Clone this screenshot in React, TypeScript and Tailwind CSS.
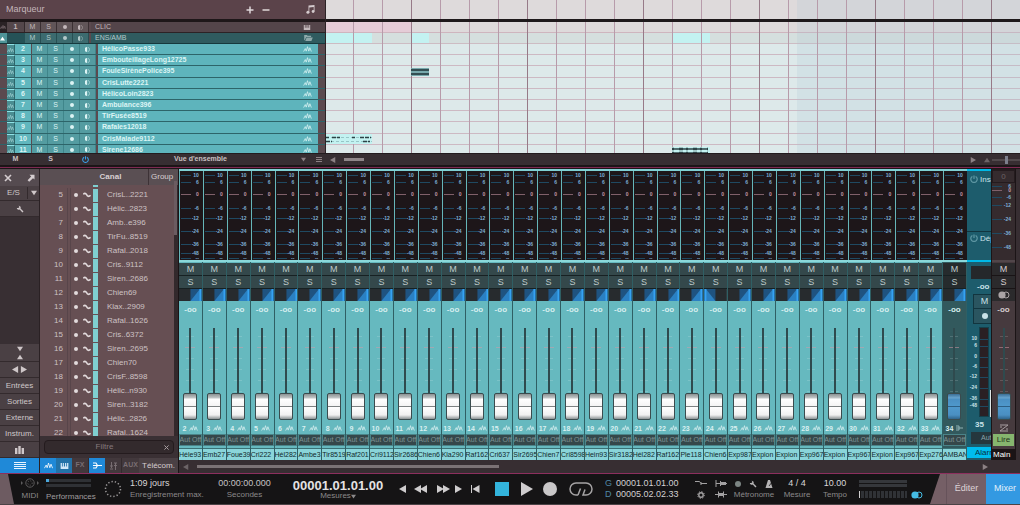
import type { ReactNode } from 'react';

type Track = { id: number; name: string };

const tracks: Track[] = [
  { id: 2, name: 'HélicoPasse933' },
  { id: 3, name: 'EmbouteillageLong12725' },
  { id: 4, name: 'FouleSirènePolice395' },
  { id: 5, name: 'CrisLutte2221' },
  { id: 6, name: 'HélicoLoin2823' },
  { id: 7, name: 'Ambulance396' },
  { id: 8, name: 'TirFusée8519' },
  { id: 9, name: 'Rafales12018' },
  { id: 10, name: 'CrisMalade9112' },
  { id: 11, name: 'Sirene12686' },
];

const channelList: Track[] = [
  { id: 5, name: 'CrisL..2221' },
  { id: 6, name: 'Hélic..2823' },
  { id: 7, name: 'Amb..e396' },
  { id: 8, name: 'TirFu..8519' },
  { id: 9, name: 'Rafal..2018' },
  { id: 10, name: 'Cris..9112' },
  { id: 11, name: 'Siren..2686' },
  { id: 12, name: 'Chien69' },
  { id: 13, name: 'Klax..2909' },
  { id: 14, name: 'Rafal..1626' },
  { id: 15, name: 'Cris..6372' },
  { id: 16, name: 'Siren..2695' },
  { id: 17, name: 'Chien70' },
  { id: 18, name: 'CrisF..8598' },
  { id: 19, name: 'Hélic..n930' },
  { id: 20, name: 'Siren..3182' },
  { id: 21, name: 'Hélic..2826' },
  { id: 22, name: 'Rafal..1624' },
];

const strips = [
  'Héle93', 'Emb27', 'Foue39', 'Cri222', 'Hél282', 'Ambe3', 'Tir8519', 'Raf201', 'Cri9112', 'Sir2686', 'Chien6',
  'Kla290', 'Raf162', 'Cri637', 'Sir2695', 'Chien7', 'Cri8598', 'Hein93', 'Sir3182', 'Hél282', 'Raf162', 'Ple118',
  'Chien6', 'Exp987', 'Expion', 'Expion', 'Exp967', 'Expion', 'Exp967', 'Expion', 'Exp967', 'Exp276', 'AMBAN',
];

const meterScale = [
  { label: '10', h: 'h-[7px]' },
  { label: '6', h: 'h-[7px]' },
  { label: '0', h: 'h-[17px]' },
  { label: '-6', h: 'h-[10px]' },
  { label: '-12', h: 'h-[11px]' },
  { label: '-24', h: 'h-[14px]' },
  { label: '-36', h: 'h-[13px]' },
  { label: '-48', h: 'h-[4px]' },
  { label: '--', h: 'h-[7px]' },
];

const mainScale = [
  { label: '6', h: 'h-[4px]' },
  { label: '0', h: 'h-[5px]' },
  { label: '-6', h: 'h-[8px]' },
  { label: '-12', h: 'h-[8px]' },
  { label: '-24', h: 'h-[20px]' },
  { label: '-36', h: 'h-[8px]' },
  { label: '-48', h: 'h-[20px]' },
];

const alanScale = [
  { label: '10', h: 'h-[7px]' },
  { label: '6', h: 'h-[7px]' },
  { label: '0', h: 'h-[14px]' },
  { label: '-6', h: 'h-[7px]' },
  { label: '-12', h: 'h-[12px]' },
  { label: '-24', h: 'h-[10px]' },
  { label: '-36', h: 'h-[12px]' },
  { label: '-48', h: 'h-[3px]' },
];

function Wave({ className }: { className?: string }) {
  return (
    <svg viewBox="0 0 10 7" className={className} fill="none" stroke="currentColor" strokeWidth="0.9">
      <path d="M0.5 6.5 L2.4 3 L3.5 6 L5 0.8 L6.5 6 L7.8 2 L9.5 6.5" />
    </svg>
  );
}

function Sine({ className }: { className?: string }) {
  return (
    <svg viewBox="0 0 8 6" className={className} fill="none" stroke="currentColor" strokeWidth="1.6">
      <path d="M0.3 2.4 C1.2 1 2.6 1 3.6 2.6 C4.6 4.4 5.8 5 7.6 3.4" />
    </svg>
  );
}

function Wrench({ className }: { className?: string }) {
  return (
    <svg viewBox="0 0 10 10" className={className}>
      <path d="M1 3.6 A2.6 2.6 0 0 0 4.6 5.6 L8 9.4 L9.4 8 L5.7 4.4 A2.6 2.6 0 0 0 3.2 0.8 L4.3 2.4 L3 3.8 Z" fill="currentColor" />
    </svg>
  );
}

function Power({ className }: { className?: string }) {
  return (
    <svg viewBox="0 0 10 10" className={className} fill="none" stroke="currentColor" strokeWidth="1.5">
      <path d="M3 1.8 A4 4 0 1 0 7 1.8 M5 0.5 V5" />
    </svg>
  );
}

function Keys({ className }: { className?: string }) {
  return (
    <svg viewBox="0 0 10 7" className={className}>
      <path d="M0.5 0 H2 V4 H3 V0 H4.3 V4 H5.6 V0 H7 V4 H8 V0 H9.5 V7 H0.5 Z" fill="currentColor" />
    </svg>
  );
}

function Tri({ dir, className }: { dir: 'left' | 'right' | 'up' | 'down'; className?: string }) {
  const paths = { left: 'M7 0 V8 L0 4 Z', right: 'M1 0 V8 L8 4 Z', up: 'M0 7 H8 L4 1 Z', down: 'M0 1 H8 L4 7 Z' };
  return (
    <svg viewBox="0 0 8 8" className={className}>
      <path d={paths[dir]} fill="currentColor" />
    </svg>
  );
}

function Stereo({ className }: { className?: string }) {
  return (
    <svg viewBox="0 0 12 8" className={className}>
      <circle cx="4" cy="4" r="3.6" fill="currentColor" />
      <circle cx="8" cy="4" r="3" fill="none" stroke="currentColor" />
    </svg>
  );
}

function TrackButtons({ tone }: { tone: string }) {
  return (
    <>
      <button className={`w-4 ${tone}`}>M</button>
      <button className={`w-4 ${tone}`}>S</button>
      <button aria-label="Record" className={`flex w-4 items-center justify-center ${tone}`}>
        <span className="size-1 rounded-full bg-current" />
      </button>
      <button aria-label="Monitor" className={`flex w-4 items-center justify-center ${tone}`}>
        <svg viewBox="0 0 6 6" className="size-[5px]">
          <path d="M2.6 0 V6 A3 3 0 0 1 2.6 0 Z" fill="currentColor" />
          <path d="M3.6 0.5 A2.6 2.6 0 0 1 3.6 5.5" fill="none" stroke="currentColor" strokeWidth="0.6" />
        </svg>
      </button>
    </>
  );
}

function TrackPanel() {
  return (
    <div className="flex w-[326px] flex-none flex-col border-r border-[#2b2225] bg-[#5b4a4f]">
      <div className="flex h-[19px] items-center bg-[#5b434a] pl-1.5 pr-2.5 text-[9px] text-[#c4b6ba]">
        <span className="flex-1">Marqueur</span>
        <button aria-label="Add" className="mr-2">
          <svg viewBox="0 0 8 8" className="size-2"><path d="M4 0.5 V7.5 M0.5 4 H7.5" stroke="#e0d8da" strokeWidth="1.5" /></svg>
        </button>
        <button aria-label="Remove" className="mr-9">
          <svg viewBox="0 0 8 8" className="size-2"><path d="M0.5 4 H7.5" stroke="#e0d8da" strokeWidth="1.5" /></svg>
        </button>
        <svg viewBox="0 0 9 9" className="size-[9px] text-[#d5cbce]" fill="currentColor">
          <path d="M2.5 0.5 L8.5 0 V6.5 H7.7 V2 L3.3 2.4 V7.5 H2.5 Z" />
          <circle cx="1.9" cy="7.3" r="1.5" />
          <circle cx="7.1" cy="6.5" r="1.4" />
        </svg>
      </div>
      <div className="h-[3px] bg-[#1e1719]" />
      <div className="flex h-[11px] border-b border-[#2c2225] text-[7px] leading-[10px] text-[#c3b8bb]">
        <div className="w-[7px] bg-[#2a2225]"><Wave className="mt-0.5 size-1.5 text-[#8d7d82]" /></div>
        <div className="w-[18px] border-r border-[#33292c] bg-[#54474b] text-center font-bold">1</div>
        <TrackButtons tone="border-r border-[#3b3033] bg-[#615558]" />
        <div className="ml-0.5 flex flex-1 items-center justify-between bg-[#54454a] pl-1 pr-3.5">
          <span>CLIC</span>
          <Keys className="h-[5px] w-2" />
        </div>
      </div>
      <div className="flex h-[11px] border-b border-[#16393d] text-[7px] leading-[10px] text-[#b3c9ca]">
        <div className="flex w-[7px] items-center bg-[#4f9498]"><Tri dir="up" className="size-[5px] text-white" /></div>
        <div className="w-[18px] bg-[#255257]" />
        <TrackButtons tone="border-r border-[#274f53] bg-[#3c6b6f]" />
        <div className="ml-0.5 flex flex-1 items-center justify-between bg-[#2f5b5f] pl-1 pr-3">
          <span>ENS/AMB</span>
          <svg viewBox="0 0 10 7" className="h-1.5 w-[9px]" fill="#8fa9ab"><path d="M0 0 H3 L4 1 H8 V2.4 H2.4 L0.6 6 H0 Z M2.8 3 H10 L8.4 7 H1.2 Z" /></svg>
        </div>
      </div>
      <div className="h-[109px] overflow-hidden">
        <div className="grid h-28 auto-rows-fr">
          {tracks.map((t) => (
            <div key={t.id} className="flex border-b border-[#2d6469] px-[7px] text-[7px] leading-[10px] text-[#dcf4f4]">
              <div className="w-2 border-r border-t border-[#2d6469] border-t-[#8fe3e6] bg-[#4a8d91]">
                <Wave className="mt-0.5 h-1.5 w-[7px] text-[#9fd0d3]" />
              </div>
              <div className="mr-px w-4 bg-[#60b7be] text-center font-bold">{t.id}</div>
              <TrackButtons tone="border-r border-[#3f858a] bg-[#549ca1]" />
              <div className="ml-0.5 flex min-w-0 flex-1 items-center justify-between bg-[#5eb4bc] pl-1 pr-1.5">
                <span className="font-bold">{t.name}</span>
                <Wave className="h-1.5 w-[9px]" />
              </div>
            </div>
          ))}
        </div>
      </div>
    </div>
  );
}

function Arrangement() {
  return (
    <div className="relative min-w-0 flex-1 overflow-hidden">
      <div className="h-[19px] bg-[#dedadb]" />
      <div className="relative z-10 h-[3px] bg-[#1e191b]" />
      <div className="h-[11px] border-b border-[#cfb5be] bg-[#dedadb]">
        <div className="h-full w-[85px] bg-[#e5ccd7]" />
      </div>
      <div className="relative h-[11px] border-b border-[#cdbcc3] bg-[#d5dfde]">
        <div className="absolute left-0 top-0 h-full w-[46px] bg-[#c3f2f1]" />
        <div className="absolute left-[85px] top-0 h-full w-[18px] bg-[#c3f2f1]" />
        <div className="absolute left-[346px] top-0 h-full w-[38px] bg-[#c3f2f1]" />
      </div>
      <div className="h-[109px] overflow-hidden">
        <div className="grid h-28 auto-rows-fr bg-[#dde9ea]">
          {tracks.map((t) => (
            <div key={t.id} className="relative border-b border-[#cdb9c3]">
              {t.id === 4 && (
                <svg viewBox="0 0 18 8" className="absolute left-[85px] top-0.5 z-10 h-2 w-[18px]">
                  <rect width="18" height="8" fill="#8fc7ca" />
                  <path d="M0 2 H18 M0 6 H18" stroke="#344e53" strokeWidth="2.4" />
                </svg>
              )}
              {t.id === 10 && (
                <svg viewBox="0 0 46 10" className="absolute left-0 top-0 z-10 h-2.5 w-[46px]">
                  <rect width="46" height="10" fill="#c3f2f1" />
                  <path d="M0 3.5 H46 M0 7.5 H46" stroke="#6c9a9c" strokeWidth="0.5" strokeDasharray="3 2" />
                  <path d="M0 3.5 H3 M6 3.5 H14 M26 3.5 H29 M34 3.5 H45 M0 7.5 H6 M37 7.5 H44" stroke="#2c4246" strokeWidth="1.6" strokeDasharray="4 1" />
                </svg>
              )}
              {t.id === 11 && (
                <svg viewBox="0 0 38 8" className="absolute left-[346px] top-0.5 z-10 h-2 w-[38px]">
                  <rect width="38" height="8" fill="#c3f2f1" />
                  <path d="M0 2 H36 M0 6 H36" stroke="#2c4246" strokeWidth="1.4" />
                  <path d="M0 2 H36 M0 6 H36" stroke="#2c4246" strokeWidth="2.4" strokeDasharray="2 5 4 3" />
                </svg>
              )}
            </div>
          ))}
        </div>
      </div>
      {/* past the end of the song */}
      <div className="absolute inset-y-0 left-[471px] right-0 bg-[#a9c5d0]/20" />
      <div className="absolute inset-0 bg-[linear-gradient(90deg,transparent_27px,#b79baa_27px,#b79baa_28px,transparent_28px)] bg-size-[29px_100%]" />
      <div className="absolute inset-0 bg-[linear-gradient(90deg,transparent_85px,#977a88_85px,#977a88_86px,transparent_86px)] bg-size-[116px_100%]" />
    </div>
  );
}

function OverviewBar() {
  return (
    <div className="flex h-3 items-center border-t border-[#231b1e] bg-[#372e32] text-[7px] text-[#c9c1c3]">
      <div className="flex w-[326px] flex-none items-center">
        <button className="w-[31px] font-bold">M</button>
        <button className="w-[39px] font-bold">S</button>
        <button aria-label="Power" className="flex w-[30px] justify-center"><Power className="size-[7px] text-[#3aa0e8]" /></button>
        <span className="flex-1 text-center font-bold">Vue d'ensemble</span>
        <Tri dir="down" className="mr-2.5 size-[5px] text-[#8c8184]" />
        <svg viewBox="0 0 6 5" className="mr-1 h-[5px] w-1.5" fill="#8c8184"><path d="M0 0 H6 V1 H0 Z M0 2 H6 V3 H0 Z M0 4 H6 V5 H0 Z" /></svg>
      </div>
      <Tri dir="left" className="ml-1 size-1.5 text-[#8c8184]" />
      <div className="ml-2 h-[3px] w-5 bg-[#8f8689]" />
      <div className="flex-1" />
      <Tri dir="right" className="mr-2 size-1.5 text-[#8c8184]" />
      <Tri dir="up" className="mr-0.5 size-1.5 text-[#6c6467]" />
      <svg viewBox="0 0 28 8" className="h-2 w-7"><path d="M0 4 H28" stroke="#6c6467" /><rect x="13" width="3" height="8" fill="#7d7f8c" /></svg>
    </div>
  );
}

function SideCell({ children, tall }: { children: ReactNode; tall?: boolean }) {
  return (
    <button className={`flex w-full flex-col items-center justify-center border-b border-[#332a2d] bg-[#4a4044] ${tall ? 'h-[18px]' : 'h-4'}`}>
      {children}
    </button>
  );
}

function MixerSide() {
  return (
    <div className="flex w-10 flex-none flex-col border-r border-[#2a2124] bg-[#382f33] text-[8px] text-[#cfc7c9]">
      <div className="flex h-[17px] items-center justify-between bg-[#554b50] px-1">
        <button aria-label="Close">
          <svg viewBox="0 0 8 8" className="size-2"><path d="M1 1 L7 7 M7 1 L1 7" stroke="#d5cdd0" strokeWidth="1.6" /></svg>
        </button>
        <button aria-label="Detach">
          <svg viewBox="0 0 8 8" className="size-2"><path d="M2.5 0.8 H7.5 V5.5 L6 4.2 L2.2 7.8 L0.6 6.2 L4.2 2.5 Z" fill="#d5cdd0" /></svg>
        </button>
      </div>
      <div className="flex h-[15px] items-center border-b border-[#332a2d] bg-[#4a4044]">
        <button className="w-7 border-r border-[#332a2d]">E/S</button>
        <Tri dir="down" className="mx-auto size-1.5" />
      </div>
      <SideCell><Wrench className="size-2" /></SideCell>
      <div className="flex-1" />
      <SideCell tall>
        <Tri dir="down" className="mb-0.5 size-1.5" />
        <Tri dir="up" className="size-1.5" />
      </SideCell>
      <SideCell>
        <span className="flex gap-px"><Tri dir="left" className="size-[7px]" /><Tri dir="right" className="size-[7px]" /></span>
      </SideCell>
      <SideCell>Entrées</SideCell>
      <SideCell>Sorties</SideCell>
      <SideCell>Externe</SideCell>
      <SideCell>Instrum.</SideCell>
      <SideCell>
        <svg viewBox="0 0 9 8" className="h-2 w-[9px]"><path d="M0 2 H2.4 V8 H0 Z M3.3 0 H5.7 V8 H3.3 Z M6.6 2 H9 V8 H6.6 Z" fill="currentColor" /></svg>
      </SideCell>
      <button aria-label="Channel list" className="flex h-[15px] items-center justify-center bg-[#1f89d8]">
        <svg viewBox="0 0 12 7" className="h-[7px] w-3" fill="#e8f4ff"><path d="M0 0 H12 V1 H0 Z M0 2 H12 V3 H0 Z M0 4 H12 V5 H0 Z M0 6 H12 V7 H0 Z" /></svg>
      </button>
    </div>
  );
}

function ChannelList() {
  return (
    <div className="flex w-[139px] flex-none flex-col border-r border-[#1b1416] bg-[#3a3034]">
      <div className="flex h-4 items-center bg-[#5a4f53] text-[8px] leading-none text-[#d8cfd2]">
        <span className="ml-[33px] w-[75px] text-center font-bold">Canal</span>
        <span className="h-full w-px bg-[#3d3236]" />
        <span className="pl-0.5">Group</span>
      </div>
      <div className="flex h-[251px]">
        <div className="w-[134px] overflow-hidden bg-[#664f53]">
          <div className="mb-px ml-[53px] h-0.5 w-[5px] bg-[#7fcfd0]" />
          {channelList.map((c) => (
            <div key={c.id} className="flex h-3.5 items-center text-[8px] leading-none text-[#cdc2c4]">
              <span className="w-[23px] text-right">{c.id}</span>
              <span className="ml-1 h-full w-1 border-x border-[#58454a]" />
              <span className="ml-[3px] size-1 rounded-full bg-[#e2dadc]" />
              <Sine className="ml-[5px] h-1.5 w-2 text-[#e2dadc]" />
              <span className="ml-0.5 h-[13px] w-[5px] bg-[#7fcfd0]" />
              <span className="ml-[9px]">{c.name}</span>
            </div>
          ))}
        </div>
        <div className="flex-1 bg-[#33292c]">
          <div className="-mt-1 h-[54px] w-[3px] bg-[#6b5c61]" />
        </div>
      </div>
      <div className="flex flex-1 items-center px-1">
        <div className="flex h-3.5 w-full items-center rounded-sm border border-[#241b1e] bg-[#332a2d] pr-1">
          <input aria-label="Filtre" placeholder="Filtre" className="w-full min-w-0 bg-transparent text-center text-[8px] leading-3 text-[#cfc7c9] outline-none placeholder:text-[#85797d]" />
          <svg viewBox="0 0 6 6" className="size-[5px] flex-none"><path d="M0.5 0.5 L5.5 5.5 M5.5 0.5 L0.5 5.5" stroke="#a89ea1" strokeWidth="1.2" /></svg>
        </div>
      </div>
      <div className="flex h-[15px] text-[7px] text-[#796e72]">
        <button aria-label="Audio" className="flex w-4 items-center justify-center bg-[#1f89d8]"><Wave className="h-[7px] w-[9px] text-white" /></button>
        <button aria-label="Instruments" className="flex w-4 items-center justify-center bg-[#2272a8]"><Keys className="h-1.5 w-[9px] text-[#cfe6f7]" /></button>
        <button className="w-[17px] border-r border-[#332a2d] bg-[#42383c] font-bold">FX</button>
        <button aria-label="Bus" className="flex w-4 items-center justify-center bg-[#1f89d8]">
          <svg viewBox="0 0 9 7" className="h-[7px] w-[9px]"><path d="M0 1 H3 L4.5 3.5 H9 M0 3.5 H5 M0 6 H3 L4.5 3.5" stroke="#fff" strokeWidth="1.1" fill="none" /></svg>
        </button>
        <button aria-label="VCA" className="flex w-[17px] items-center justify-center border-r border-[#332a2d] bg-[#42383c]">
          <svg viewBox="0 0 9 8" className="h-2 w-[9px]" stroke="currentColor" fill="none"><path d="M2.5 0 V6 M1 4 H4 M1 7 H4 M6.5 1 V8 M5 3.5 H8 M5 1 H8" /></svg>
        </button>
        <button className="w-[17px] bg-[#42383c] font-bold">AUX</button>
        <button className="flex-1 bg-[#4a4044] text-[8px] text-[#d5cdd0]">Télécom.</button>
      </div>
    </div>
  );
}

function Scale({ items }: { items: { label: string; h: string }[] }) {
  return (
    <>
      {items.map((s) => (
        <div key={s.label} className={`flex items-center justify-between pr-1 text-[5px] font-bold leading-none ${s.h} ${s.label === '0' ? 'text-[#c39aa8]' : 'text-[#7fb0d6]'}`}>
          <span className={`h-px w-2.5 ${s.label === '0' ? 'bg-[#80606a]' : 'bg-[#1f4961]'}`} />
          {s.label}
        </div>
      ))}
    </>
  );
}

function Pan({ flip }: { flip?: boolean }) {
  return (
    <svg viewBox="0 0 24 12" preserveAspectRatio="none" className={`h-3 w-full bg-[#272b2e] ${flip ? '-scale-x-100' : ''}`}>
      <rect x="12" width="12" height="12" fill="#1f5380" />
      <path d="M12 12 L22 0 V12 Z" fill="#2b80c2" />
      <rect x="21.5" width="2" height="12" fill="#35a3f2" />
    </svg>
  );
}

function Fader({ label, blue }: { label: string; blue?: boolean }) {
  return (
    <div className="relative mt-[13px] flex h-[92px] justify-center">
      <div className="absolute inset-x-0 top-2 flex flex-col items-center gap-2.5">
        <span className="h-px w-2 bg-white/15" />
        <span className="h-px w-2.5 bg-[#d89aa8]/50" />
        <span className="h-px w-2 bg-white/15" />
        <span className="h-px w-2 bg-white/15" />
        <span className="h-px w-2 bg-white/15" />
        <span className="h-px w-2 bg-white/15" />
      </div>
      <input
        type="range"
        aria-label={label}
        min={0}
        max={100}
        defaultValue={0}
        className={`relative h-[92px] w-3.5 appearance-none bg-[linear-gradient(90deg,transparent_6px,#2f4a4e_6px,#2f4a4e_8px,transparent_8px)] [direction:rtl] [writing-mode:vertical-lr] [&::-webkit-slider-thumb]:h-[27px] [&::-webkit-slider-thumb]:w-3.5 [&::-webkit-slider-thumb]:appearance-none [&::-webkit-slider-thumb]:rounded-xs [&::-webkit-slider-thumb]:border [&::-webkit-slider-thumb]:border-[#3a4b4e] ${
          blue
            ? '[&::-webkit-slider-thumb]:bg-[linear-gradient(#3b6f96_0,#68a5cf_4px,#4a8fc2_5px,#4f98cc_12px,#2c5f85_12px,#2c5f85_13px,#4f98cc_13px,#4a8fc2_21px,#2f648b)]'
            : '[&::-webkit-slider-thumb]:bg-[linear-gradient(#8b9293_0,#c4c8c9_4px,#ffffff_5px,#f4f4f4_12px,#7c8182_12px,#7c8182_13px,#ffffff_13px,#f0f0f0_21px,#8b9293)]'
        }`}
      />
    </div>
  );
}

function Strip({ id, name }: { id: number; name: string }) {
  const bus = id === 34;
  return (
    <div className={`flex min-w-0 flex-1 flex-col overflow-hidden ${bus ? 'bg-[#32595d]' : 'bg-[#66b9bf]'}`}>
      <div className="h-0.5 bg-[#7fd0d3]" />
      <div className="h-[89px] overflow-hidden border-l border-[#66b6b9] bg-[#1d1619] pl-px pt-px">
        <Scale items={meterScale} />
      </div>
      <div className="h-0.5 bg-[#8ad8da]" />
      <div className="flex flex-1 flex-col border-r border-[#2f5f64]">
        <button className={`mt-px h-[13px] border-b border-[#172123] text-[9px] leading-none text-[#bfcaca] ${bus ? 'bg-[#262b2d]' : 'bg-[#34484b]'}`}>M</button>
        <button className={`h-[13px] border-b border-[#172123] text-[9px] leading-none text-[#bfcaca] ${bus ? 'bg-[#262b2d]' : 'bg-[#34484b]'}`}>S</button>
        <Pan flip={id === 24} />
        <div className="mt-1 h-2.5 text-center text-[8px] font-bold leading-[10px] text-[#d6eeef]">-oo</div>
        <Fader label={`Volume ${id}`} blue={bus} />
        <div className="mt-1 flex h-2 items-center justify-center gap-[3px] text-[7px] font-bold leading-none text-[#d9f0f1]">
          {id}
          {bus ? (
            <svg viewBox="0 0 7 6" className="h-1.5 w-[7px]"><path d="M0 1 H3 V5 H0 M0 3 H7" stroke="#8fb2b4" fill="none" /></svg>
          ) : (
            <Wave className="h-1.5 w-[9px]" />
          )}
        </div>
        <button className="mt-0.5 flex h-3 justify-center whitespace-nowrap border border-[#4a8489] bg-[#35474a] text-[7px] leading-[10px] text-[#7e9394]">Aut Off</button>
        <div className="mt-0.5 h-px bg-[#3a7175]" />
        <div className="h-[11px] overflow-hidden whitespace-nowrap bg-[#8ad5da] text-[7px] leading-[11px] text-[#10282b]">{name}</div>
      </div>
    </div>
  );
}

function AlanStrip() {
  return (
    <div className="flex w-[25px] flex-none flex-col overflow-hidden border-r border-[#1b1416] bg-[#1d5c6c] text-[#c9e2e8]">
      <div className="h-0.5 bg-[#00b9e8]" />
      <div className="flex h-[61px] items-start gap-0.5 whitespace-nowrap border-b border-[#12353f] pl-[3px] pt-1 text-[8px] leading-[10px]">
        <Power className="size-2 flex-none text-[#5f97a3]" />Inserts
      </div>
      <div className="flex h-7 items-start gap-0.5 whitespace-nowrap pl-[3px] pt-0.5 text-[8px] leading-[10px]">
        <Power className="size-2 flex-none text-[#5f97a3]" />Départs
      </div>
      <div className="h-0.5 bg-[#00b9e8]" />
      <div className="ml-1 mt-1 h-[13px] bg-[#25282b]" />
      <div className="mt-[3px] pl-2.5 text-[8px] font-bold leading-[10px]">-oo</div>
      <div className="ml-1.5 mt-0.5 flex flex-col border border-r-0 border-[#12353f] bg-[#2a5560]">
        <button className="h-3.5 border-b border-[#12353f] pl-1 text-[9px] leading-none">M</button>
        <button aria-label="Record" className="flex h-3.5 items-center justify-center pl-1"><span className="size-1.5 rounded-full bg-current" /></button>
      </div>
      <div className="mt-[3px] flex h-[90px]">
        <div className="w-2.5 pt-2 text-right text-[5px] font-bold leading-none">
          {alanScale.map((s) => (
            <div key={s.label} className={`flex items-center justify-end ${s.h}`}>{s.label}</div>
          ))}
        </div>
        <div className="ml-0.5 w-2.5 border border-[#15404b] bg-[#2a2024] pt-2">
          {alanScale.map((s) => (
            <div key={s.label} className={`flex items-center ${s.h}`}><span className="h-px w-full bg-[#1f4961]" /></div>
          ))}
        </div>
        <div className="ml-px mt-auto h-[27px] w-px bg-[#dfe6e7]" />
      </div>
      <div className="mt-[3px] h-3 pl-2 text-[8px] font-bold leading-[10px]">35</div>
      <div className="ml-1 h-3 overflow-hidden whitespace-nowrap bg-[#25373d] pl-2.5 text-[7px] leading-3 text-[#8aa2a8]">Aut Off</div>
      <div className="mt-[3px] h-[11px] overflow-hidden whitespace-nowrap bg-[#00bcee] pl-2 text-[8px] leading-[11px] text-[#06323e]">Alarme</div>
    </div>
  );
}

function MainStrip() {
  return (
    <div className="mr-1 flex w-6 flex-none flex-col border-r border-[#1b1416] bg-[#463a3e] text-[#d5cdd0]">
      <div className="h-[91px] bg-[#352b2e]">
        <div className="mb-px h-3.5 border border-t-2 border-[#241b1e] text-center text-[8px] leading-3 text-[#6b6265]">0</div>
        <Scale items={mainScale} />
      </div>
      <div className="h-0.5 bg-[#51464a]" />
      <button className="mt-px h-[13px] border-b border-[#191416] bg-[#2b2a2c] text-[9px] leading-none">M</button>
      <button className="h-[13px] border-b border-[#191416] bg-[#2b2a2c] text-[9px] leading-none">S</button>
      <div className="flex h-3 items-center justify-center bg-[#2b2a2c]"><Stereo className="h-2 w-3 text-[#a9a3a5]" /></div>
      <div className="mt-1 h-2.5 text-center text-[8px] font-bold leading-[10px]">-oo</div>
      <Fader label="Volume Main" blue />
      <div className="mt-1 flex h-2 justify-center">
        <svg viewBox="0 0 10 8" className="h-2 w-2.5" fill="none" stroke="#a79da0"><path d="M1 1 H9 L1 7 H9 M1 3 H3 M7 5 H9" /></svg>
      </div>
      <button className="mx-px mt-0.5 h-3 bg-[#86b56e] text-[8px] leading-3 text-[#22331a]">Lire</button>
      <div className="mt-[3px] h-[11px] bg-[#1b1416] pl-px text-[8px] leading-[11px] text-white">Main</div>
    </div>
  );
}

function Mixer() {
  return (
    <div className="flex h-[304px]">
      <MixerSide />
      <ChannelList />
      <div className="flex min-w-0 flex-1 flex-col bg-[#372e32]">
        <div className="flex h-[291px]">
          <div className="flex min-w-0 flex-1">
            {strips.map((name, i) => (
              <Strip key={i} id={i + 2} name={name} />
            ))}
          </div>
          <AlanStrip />
          <MainStrip />
        </div>
        <div className="flex flex-1 items-center pl-1 pr-8">
          <Tri dir="left" className="size-1.5 text-[#6c6467]" />
          <div className="ml-2 h-[3px] w-[302px] bg-[#7b7275]" />
          <div className="flex-1" />
          <Tri dir="right" className="size-1.5 text-[#8c8184]" />
        </div>
      </div>
    </div>
  );
}

function Transport() {
  return (
    <div className="flex h-8 border-b border-t border-b-[#4b4346] border-t-[#8d2f5e] bg-[#151415] text-[8px] text-[#8b898a]">
      <svg viewBox="0 0 14 30" preserveAspectRatio="none" className="h-full w-3.5 flex-none"><path d="M0 0 H8 L14 30 H0 Z" fill="#6d5b61" /></svg>
      <div className="flex w-8 flex-none flex-col items-center justify-center gap-1 leading-none">
        <svg viewBox="0 0 20 10" className="h-2.5 w-5" fill="none" stroke="#5d5b5c">
          <circle cx="10" cy="5" r="4.2" />
          <circle cx="10" cy="5" r="2.2" strokeDasharray="1 1.4" />
          <path d="M1 3 L3 5 L1 7 Z M17 3 L19 5 L17 7 Z" fill="#5d5b5c" stroke="none" />
        </svg>
        MIDI
      </div>
      <div className="flex w-[58px] flex-none flex-col justify-center pt-px leading-none">
        <div className="h-[3px] w-[45px] bg-[#2f3135]"><div className="h-full w-[3px] bg-[#4aa7dc]" /></div>
        <div className="mb-1.5 mt-0.5 h-[3px] w-[45px] bg-[#2f3135]" />
        <span className="text-[#a09d9e]">Performances</span>
      </div>
      <svg viewBox="0 0 18 18" className="my-auto size-[18px] flex-none" fill="none"><circle cx="9" cy="9" r="7.5" stroke="#9b9899" strokeWidth="1.5" strokeDasharray="1.3 2.06" /></svg>
      <div className="ml-2 flex w-[78px] flex-none flex-col justify-center gap-[3px] whitespace-nowrap leading-none">
        <span className="text-[9px] text-[#d8d6d7]">1:09 jours</span>
        Enregistrement max.
      </div>
      <div className="ml-1 flex w-[65px] flex-none flex-col items-center justify-center gap-[3px] leading-none">
        <span className="text-[9px] text-[#c5c3c4]">00:00:00.000</span>
        Secondes
      </div>
      <div className="ml-3 flex w-[98px] flex-none flex-col items-center justify-center pt-px leading-none">
        <span className="text-[13px] font-bold text-[#e4e2e3]">00001.01.01.00</span>
        <span className="flex items-center">Mesures<Tri dir="down" className="size-[5px]" /></span>
      </div>
      <div className="ml-3 flex flex-none items-center text-[#cfcdce]">
        <button aria-label="Previous" className="w-[15px]"><Tri dir="left" className="size-2" /></button>
        <button aria-label="Rewind" className="flex w-[22px]"><Tri dir="left" className="size-2" /><Tri dir="left" className="-ml-0.5 size-2" /></button>
        <button aria-label="Forward" className="flex w-[18px]"><Tri dir="right" className="size-2" /><Tri dir="right" className="-ml-0.5 size-2" /></button>
        <button aria-label="Next" className="w-[17px]"><Tri dir="right" className="size-2" /></button>
        <button aria-label="Return to zero" className="w-6">
          <svg viewBox="0 0 9 8" className="h-2 w-[9px]"><path d="M0.5 0 V8" stroke="currentColor" /><path d="M8.5 0 V8 L1.5 4 Z" fill="currentColor" /></svg>
        </button>
        <button aria-label="Stop" className="mr-3 size-3.5 bg-[#33b4dc]" />
        <button aria-label="Play" className="mr-2.5">
          <svg viewBox="0 0 12 14" className="h-3.5 w-3"><path d="M0 0 L12 7 L0 14 Z" fill="currentColor" /></svg>
        </button>
        <button aria-label="Record" className="mr-3 size-3.5 rounded-full bg-[#c9c7c8]" />
        <button aria-label="Loop">
          <svg viewBox="0 0 24 14" className="h-3.5 w-6" fill="none" stroke="#a5a3a4" strokeWidth="1.5"><path d="M9 13 H7 A6 6 0 0 1 7 1 H17 A6 6 0 0 1 17 13 H14 L16 7.5 M11.5 6.5 L9 13" /></svg>
        </button>
      </div>
      <div className="ml-3 flex w-[78px] flex-none flex-col justify-center gap-0.5 text-[9px] leading-none text-[#d2d0d1]">
        <span className="flex"><span className="w-[11px] text-[#4f88a5]">G</span>00001.01.01.00</span>
        <span className="flex"><span className="w-[11px] text-[#4f88a5]">D</span>00005.02.02.33</span>
      </div>
      <div className="ml-3 grid flex-none grid-cols-2 content-center items-center justify-items-center gap-x-2 gap-y-1 text-[#a3a1a2]">
        <svg viewBox="0 0 12 6" className="h-1.5 w-3" fill="none" stroke="currentColor"><path d="M0 1.5 H4.5 L6 3.5 H12 M6 2 V5" /></svg>
        <svg viewBox="0 0 12 7" className="h-[7px] w-3" fill="none" stroke="currentColor"><path d="M1 0 V7 M1 3.5 H12 M5.5 1 V6" /><rect x="6" y="2" width="5" height="3" fill="currentColor" stroke="none" /></svg>
        <svg viewBox="0 0 8 8" className="size-2" fill="none" stroke="currentColor"><circle cx="4" cy="4" r="2.2" strokeWidth="1.4" /><circle cx="4" cy="4" r="3.4" strokeDasharray="1.2 1.47" /></svg>
        <svg viewBox="0 0 12 7" className="h-[7px] w-3" fill="none" stroke="currentColor"><path d="M0 3.5 H12 M3.5 0.5 V6.5 M8.5 0.5 V6.5" /><rect x="3" y="2" width="6" height="3" fill="currentColor" stroke="none" /></svg>
      </div>
      <div className="ml-1 flex w-[46px] flex-none flex-col items-center justify-center gap-[3px] leading-none">
        <span className="flex w-full items-center justify-between px-1 text-[#b5b3b4]">
          <span className="size-1.5 rounded-full bg-[#7c8583]" />
          <Wrench className="size-2" />
          <svg viewBox="0 0 8 8" className="size-2"><path d="M3 0 H5 L7.5 8 H0.5 Z" fill="currentColor" /><path d="M4 6 L7.5 1.5" stroke="#151415" strokeWidth="0.8" /></svg>
        </span>
        Métronome
      </div>
      <div className="ml-1 flex w-8 flex-none flex-col items-center justify-center gap-[3px] leading-none">
        <span className="text-[9px] text-[#dad8d9]">4 / 4</span>
        Mesure
      </div>
      <div className="ml-2 flex w-7 flex-none flex-col items-center justify-center gap-[3px] leading-none">
        <span className="text-[9px] text-[#dad8d9]">10.00</span>
        Tempo
      </div>
      <div className="ml-2.5 flex flex-none flex-col justify-center">
        <div className="mb-px h-[3px] w-12 bg-[#35373b]" />
        <div className="mb-1 h-[3px] w-12 bg-[#35373b]" />
        <div className="flex items-center gap-1">
          <div className="h-[7px] w-12 border-l border-[#d0cecf] bg-[repeating-linear-gradient(90deg,#151415_0,#151415_1px,#303236_1px,#303236_4px)]" />
          <Stereo className="h-2 w-3 text-[#45bce4]" />
        </div>
      </div>
      <div className="flex-1" />
      <svg viewBox="0 0 16 30" preserveAspectRatio="none" className="h-full w-4 flex-none"><path d="M10 0 H16 V30 H0 Z" fill="#755f66" /></svg>
      <button className="w-10 flex-none border-l border-[#66525a] bg-[#755f66] text-[9px] text-[#ddd3d6]">Éditer</button>
      <button className="w-[34px] flex-none bg-[#3399e2] pl-1 text-[9px] text-[#e2f0fb]">Mixer</button>
    </div>
  );
}

export default function App() {
  return (
    <div className="min-h-screen bg-[#1c1517] font-['Liberation_Sans',Arial,sans-serif]">
      <div className="flex h-[153px]">
        <TrackPanel />
        <Arrangement />
      </div>
      <OverviewBar />
      <div className="mt-0.5 mb-px h-px bg-[#7d2a52]" />
      <Mixer />
      <Transport />
    </div>
  );
}
